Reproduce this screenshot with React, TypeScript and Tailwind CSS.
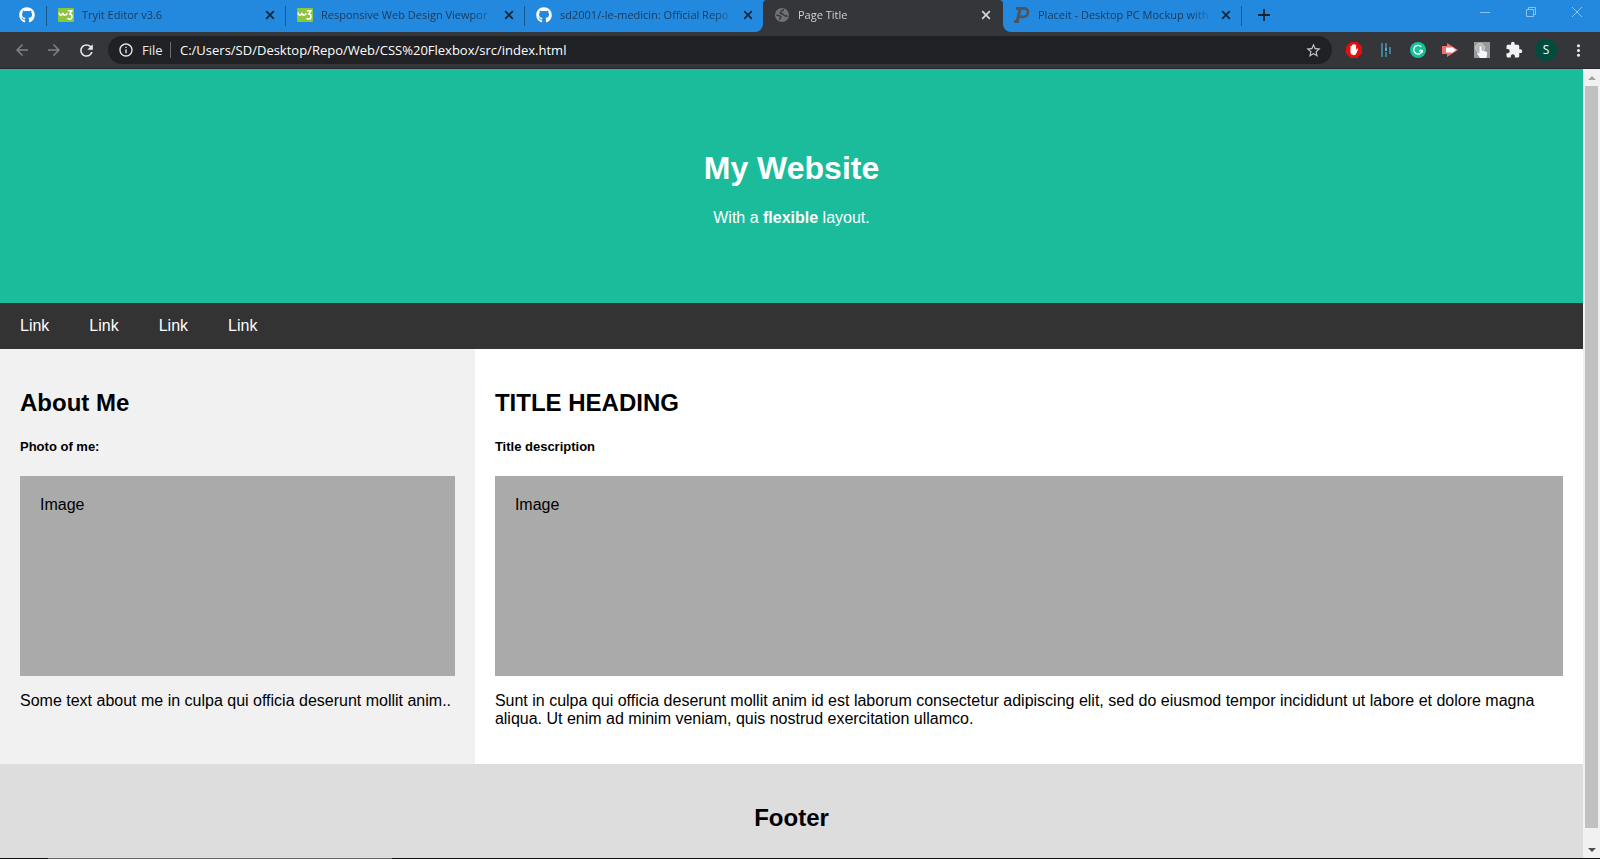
import React from "react";
import { FaGithub } from "react-icons/fa";
import {
  MdArrowBack,
  MdArrowForward,
  MdExtension,
  MdInfoOutline,
  MdMoreVert,
  MdRefresh,
  MdStarBorder,
} from "react-icons/md";

function W3Icon() {
  return (
    <svg viewBox="0 0 16 14" className="h-[14px] w-4" aria-hidden="true">
      <rect width="16" height="14" rx="1" fill="#8cc63f" />
      <path d="M1.200 4.500c.2 3.600 3.200 3.600 3.800.4.500 3.200 3.400 3.200 4.200.2" fill="none" stroke="#fff" strokeWidth="1.500" />
      <path d="M9.800 2.800h4L11.800 6c3.200.2 2.800 5.200-.4 5.200-1 0-1.500-.4-1.900-1" fill="none" stroke="#fff" strokeWidth="1.500" />
    </svg>
  );
}

function GlobeIcon() {
  return (
    <svg viewBox="0 0 14 14" className="h-[14px] w-[14px]" aria-hidden="true">
      <circle cx="7" cy="7" r="7" fill="#707276" />
      <path d="M9 1.800C6.500 2 7 3.800 5.600 4.200c-.8.600.2 1.700 1.700 1.700 2.300.1 1 1.900 3 2.100 1.300.1 2 .2 2.300-.4" fill="none" stroke="#35363a" strokeWidth="1.500" />
      <path d="M1.400 7.200c2 .1 3.900.3 4.300 1.600.2 1.200-1.200 1-.9 3" fill="none" stroke="#35363a" strokeWidth="1.500" />
    </svg>
  );
}

function PlaceitIcon() {
  return (
    <svg viewBox="0 0 16 16" className="h-4 w-4" aria-hidden="true">
      <path d="M2 1.500h8.500c5 0 4.600 8.300-1.500 8.300H6" fill="none" stroke="#4b5560" strokeWidth="2.800" />
      <path d="M6.200 1.500 3 15.500M0 14.600h5" fill="none" stroke="#4b5560" strokeWidth="3.200" />
    </svg>
  );
}

function CrossIcon() {
  return (
    <svg viewBox="0 0 10 10" className="h-[10px] w-[10px]" aria-hidden="true">
      <path d="M1.200 1.200l7.600 7.600M8.800 1.200L1.200 8.800" stroke="currentColor" strokeWidth="1.700" />
    </svg>
  );
}

type TabProps = { icon: React.ReactNode; title: string; kind?: "plain" | "beforeActive" | "active" | "afterActive" };

const outer = {
  plain: "w-[239px] bg-[#2389de]",
  beforeActive: "w-[238px] bg-[#35363a]",
  active: "w-[240px] bg-[#2389de]",
  afterActive: "w-[239px] bg-[#35363a]",
};
const inner = {
  plain: "bg-[#2389de] text-[#1b3a5a]",
  beforeActive: "rounded-br-lg bg-[#2389de] text-[#1b3a5a]",
  active: "rounded-t bg-[#35363a] text-[#d0d1d3]",
  afterActive: "rounded-bl-lg bg-[#2389de] text-[#1b3a5a]",
};

function Tab({ icon, title, kind = "plain" }: TabProps) {
  const divided = kind === "plain" || kind === "afterActive";
  return (
    <li className={`h-8 min-w-0 ${outer[kind]}`}>
      <div className={`flex h-full items-center ${inner[kind]}`}>
        <div className={`flex min-w-0 flex-1 items-center gap-2 pb-0.5 pl-[11px] ${kind === "active" ? "pr-3" : "pr-2.5"}`}>
          <span className="flex w-4 shrink-0 justify-center">{icon}</span>
          <a
            href="#"
            className="min-w-0 flex-1 overflow-hidden whitespace-nowrap text-[11px] leading-4 [mask-image:linear-gradient(to_right,#000_152px,transparent_178px)]"
          >
            {title}
          </a>
          <button type="button" aria-label={`Close ${title}`} className={kind === "active" ? "text-[#d6d7d9]" : "text-[#152536]"}>
            <CrossIcon />
          </button>
        </div>
        {divided && <span className="mb-px h-5 w-px bg-[#1a588c]" />}
      </div>
    </li>
  );
}

function TabStrip() {
  return (
    <div className="flex h-8 shrink-0 justify-between bg-[#2389de]">
      <ul className="flex min-w-0">
        <li className="flex items-center pl-[19px]">
          <a href="#" aria-label="GitHub" className="pb-0.5 pr-[11px] text-white">
            <FaGithub size={16} />
          </a>
          <span className="mb-px h-5 w-px bg-[#1a588c]" />
        </li>
        <Tab icon={<W3Icon />} title="Tryit Editor v3.6" />
        <Tab icon={<W3Icon />} title="Responsive Web Design Viewpor" />
        <Tab icon={<FaGithub size={16} color="#fff" />} title="sd2001/-le-medicin: Official Repo" kind="beforeActive" />
        <Tab icon={<GlobeIcon />} title="Page Title" kind="active" />
        <Tab icon={<PlaceitIcon />} title="Placeit - Desktop PC Mockup with" kind="afterActive" />
        <li className="flex items-center pb-0.5 pl-4">
          <button type="button" aria-label="New tab" className="text-[#152536]">
            <svg viewBox="0 0 12 12" className="h-3 w-3" aria-hidden="true">
              <path d="M6 0v12M0 6h12" stroke="currentColor" strokeWidth="1.800" />
            </svg>
          </button>
        </li>
      </ul>
      <div className="flex shrink-0 text-[#8cc3ef]">
        <button type="button" aria-label="Minimize" className="flex h-6 w-[46px] items-center justify-center">
          <svg viewBox="0 0 10 10" className="h-[10px] w-[10px]"><path d="M0 5.500h10" stroke="currentColor" /></svg>
        </button>
        <button type="button" aria-label="Restore" className="flex h-6 w-[46px] items-center justify-center">
          <svg viewBox="0 0 10 10" className="h-[10px] w-[10px]"><path d="M.5 2.500h7v7h-7zM2.500 2.500v-2h7v7h-2" fill="none" stroke="currentColor" /></svg>
        </button>
        <button type="button" aria-label="Close window" className="flex h-6 w-[46px] items-center justify-center">
          <svg viewBox="0 0 10 10" className="h-[10px] w-[10px]"><path d="M0 0l10 10M10 0L0 10" stroke="currentColor" /></svg>
        </button>
      </div>
    </div>
  );
}

const extensions: { name: string; icon: React.ReactNode }[] = [
  {
    name: "Ad blocker",
    icon: (
      <svg viewBox="0 0 16 16" className="h-4 w-4">
        <path d="M4.700 0h6.600L16 4.700v6.600L11.300 16H4.700L0 11.300V4.700z" fill="#e30f0f" />
        <path d="M4.500 8V4.200q.7-.8 1.400 0V3q.7-.8 1.400 0v-.7q.7-.8 1.400 0V3q.7-.7 1.400.1v4.600l1.200-1.200q1-.3.9.6l-1.800 4.100q-.7 2-2.600 2-3.300-.1-3.300-3.100z" fill="#fff" />
      </svg>
    ),
  },
  {
    name: "Reader",
    icon: (
      <svg viewBox="0 0 12 16" className="h-4 w-3">
        <path d="M2 1v14M6 1v5M6 10v5M10 5v7" stroke="#427f97" strokeWidth="2" />
        <path d="M6 6v3" stroke="#68a9c0" strokeWidth="2" />
      </svg>
    ),
  },
  {
    name: "Grammar checker",
    icon: (
      <svg viewBox="0 0 16 16" className="h-4 w-4">
        <circle cx="8" cy="8" r="8" fill="#15c39a" />
        <path d="M11.200 4.800A4.300 4.300 0 1 0 12.200 8.700H9" fill="none" stroke="#fff" strokeWidth="1.400" />
        <path d="M10.200 7.800l2.200.9-.4 2.200" fill="none" stroke="#fff" strokeWidth="1" />
      </svg>
    ),
  },
  {
    name: "Video speed",
    icon: (
      <svg viewBox="0 0 16 14" className="h-[14px] w-4">
        <path d="M0 3h5V0l11 7L5 14v-3H0z" fill="#f46d6d" />
        <path d="M4 4.500h6V4l4 3-4 3v-.5H4z" fill="#fff" />
      </svg>
    ),
  },
  {
    name: "Click helper",
    icon: (
      <svg viewBox="0 0 16 16" className="h-4 w-4">
        <rect width="16" height="16" fill="#999" />
        <circle cx="6" cy="6" r="4.500" fill="#b5b5b5" stroke="#cfcfcf" />
        <path d="M5.500 4.500q1-1 2 0V8.500l4.500 1q1.500.5 1.200 2L12.500 16H6L3 11.500q.8-1.500 2.500 0z" fill="#f3f8ff" />
      </svg>
    ),
  },
  { name: "Extensions", icon: <MdExtension size={18} color="#f1f3f4" /> },
];

function Toolbar() {
  return (
    <div className="flex h-[37px] shrink-0 items-center border-b border-[#29292b] bg-[#35363a] text-[#e8eaed]">
      <div className="flex items-center gap-3.5 pr-3 pl-[13px]">
        <button type="button" aria-label="Back" className="text-[#818286]"><MdArrowBack size={18} /></button>
        <button type="button" aria-label="Forward" className="text-[#818286]"><MdArrowForward size={18} /></button>
        <button type="button" aria-label="Reload"><MdRefresh size={19} /></button>
      </div>
      <div className="flex h-7 min-w-0 flex-1 items-center rounded-full bg-[#202124] px-2.5 text-[13px] leading-5">
        <MdInfoOutline size={16} className="shrink-0" />
        <span className="ml-2 w-[21px]">File</span>
        <span className="ml-[7px] h-4 w-px bg-[#6b6c6f]" />
        <input
          type="text"
          aria-label="Address"
          defaultValue="C:/Users/SD/Desktop/Repo/Web/CSS%20Flexbox/src/index.html"
          className="ml-[9px] min-w-0 flex-1 bg-transparent text-white outline-none"
        />
        <button type="button" aria-label="Bookmark" className="text-[#c6c8ca]"><MdStarBorder size={17} /></button>
      </div>
      <div className="flex items-center px-1.5">
        {extensions.map((e) => (
          <button key={e.name} type="button" aria-label={e.name} className="flex w-8 justify-center">
            {e.icon}
          </button>
        ))}
        <button type="button" className="mx-[5px] flex h-[22px] w-[22px] items-center justify-center rounded-full bg-[#004d40] text-[12px] leading-4 text-white">
          S
        </button>
        <button type="button" aria-label="Menu" className="flex w-8 justify-center"><MdMoreVert size={19} /></button>
      </div>
    </div>
  );
}

function Column({ title, subtitle, children, className }: { title: string; subtitle: string; children: string; className: string }) {
  return (
    <section className={`px-5 py-9 ${className}`}>
      <h2 className="mt-1 text-2xl leading-7 font-bold">{title}</h2>
      <h5 className="mt-[22px] text-[13px] leading-4 font-bold">{subtitle}</h5>
      <div className="mt-[21px] h-[200px] bg-[#aaa] p-5 leading-[18px]">Image</div>
      <p className="mt-4 leading-[18px]">{children}</p>
    </section>
  );
}

function WebPage() {
  return (
    <div className="min-w-0 flex-1 overflow-hidden bg-white font-['Liberation_Sans',Arial,sans-serif] text-base text-black">
      <header className="bg-[#1abc9c] px-5 pt-20 pb-[76px] text-center text-white">
        <h1 className="text-[32px] leading-[38px] font-bold">My Website</h1>
        <p className="mt-[22px] leading-[18px]">
          With a <b>flexible</b> layout.
        </p>
      </header>
      <nav className="flex bg-[#333] text-white">
        {[1, 2, 3, 4].map((n) => (
          <a key={n} href="#" className="px-5 py-3.5 leading-[18px]">
            Link
          </a>
        ))}
      </nav>
      <main className="flex">
        <Column title="About Me" subtitle="Photo of me:" className="w-[30%] bg-[#f1f1f1]">
          Some text about me in culpa qui officia deserunt mollit anim..
        </Column>
        <Column title="TITLE HEADING" subtitle="Title description" className="w-[70%] bg-white">
          Sunt in culpa qui officia deserunt mollit anim id est laborum consectetur adipiscing elit, sed do eiusmod tempor incididunt ut labore et dolore magna aliqua. Ut enim ad minim veniam, quis nostrud exercitation ullamco.
        </Column>
      </main>
      <footer className="bg-[#ddd] px-5 py-10 text-center">
        <h2 className="text-2xl leading-7 font-bold">Footer</h2>
      </footer>
    </div>
  );
}

function Scrollbar() {
  return (
    <div className="flex w-[17px] shrink-0 flex-col items-center bg-[#f1f1f1]">
      <button type="button" aria-label="Scroll up" className="flex h-[17px] items-center">
        <svg viewBox="0 0 8 4" className="h-1 w-2"><path d="M0 4l4-4 4 4z" fill="#a3a3a3" /></svg>
      </button>
      <div className="w-[13px] flex-1 bg-[#c1c1c1]" />
      <div className="h-[13px]" />
      <button type="button" aria-label="Scroll down" className="flex h-[17px] items-center">
        <svg viewBox="0 0 8 4" className="h-1 w-2"><path d="M0 0l4 4 4-4z" fill="#505050" /></svg>
      </button>
    </div>
  );
}

export default function App() {
  return (
    <div className="flex h-screen flex-col overflow-hidden font-['Open_Sans','Noto_Sans',sans-serif]">
      <TabStrip />
      <Toolbar />
      <div className="flex min-h-0 flex-1">
        <WebPage />
        <Scrollbar />
      </div>
      <div className="h-px shrink-0 bg-[#111] pl-12">
        <div className="h-px w-[344px] bg-[#666]" />
      </div>
    </div>
  );
}
